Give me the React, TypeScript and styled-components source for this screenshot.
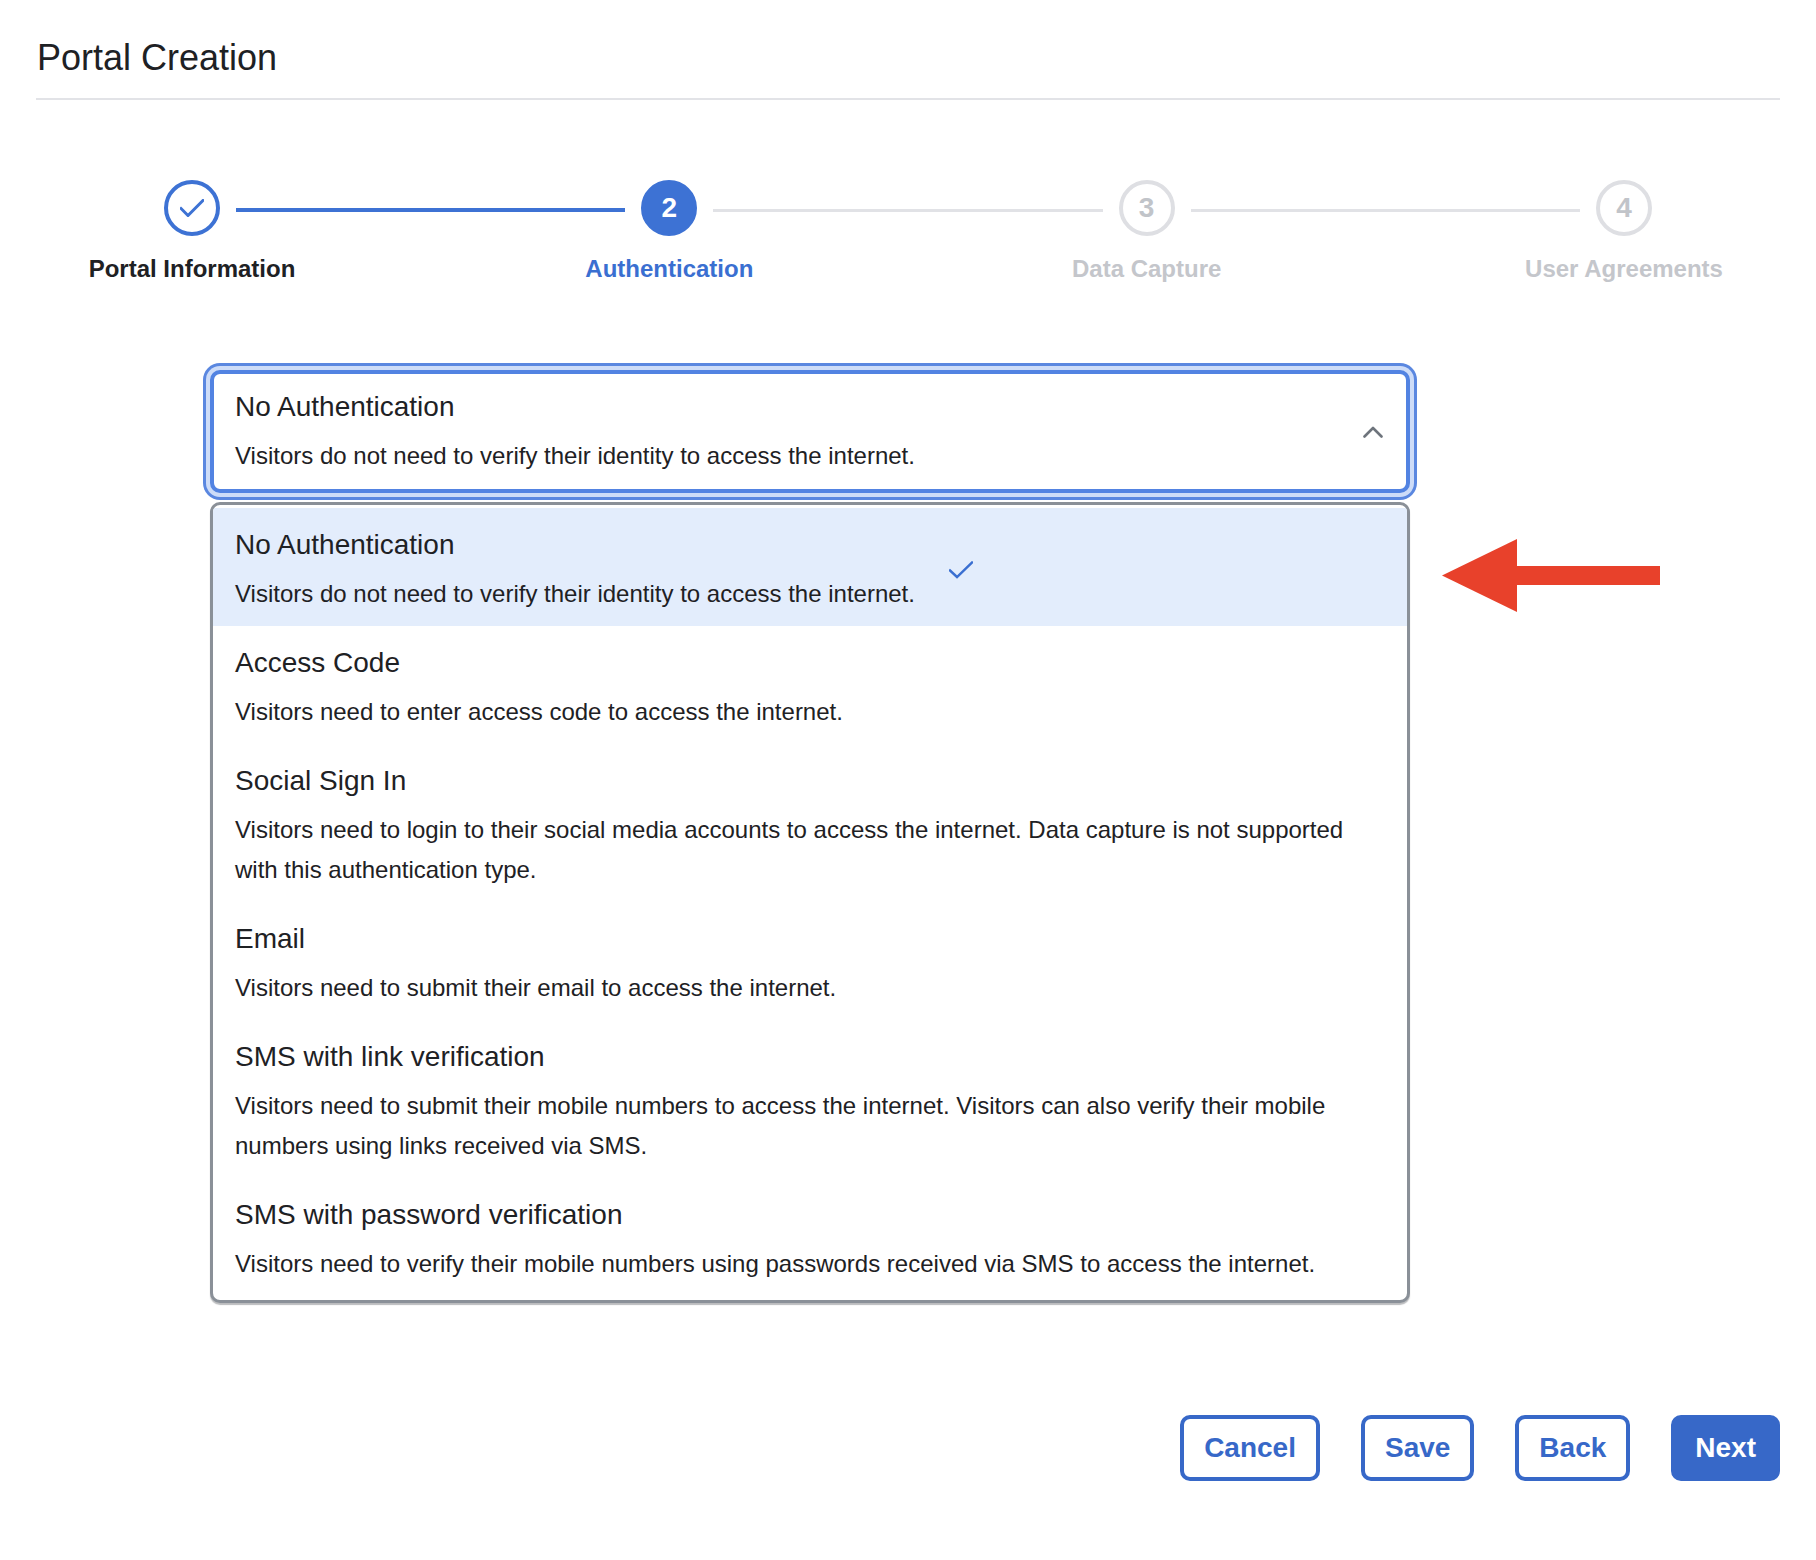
import React from "react";
import styled, { createGlobalStyle } from "styled-components";

const GlobalStyle = createGlobalStyle`
  html, body { margin: 0; padding: 0; background: #ffffff; }
  body {
    font-family: "Liberation Sans", Arial, Helvetica, sans-serif;
    color: #1e2124;
    -webkit-font-smoothing: antialiased;
  }
  * { box-sizing: border-box; }
`;

const Page = styled.div`
  padding: 0 36px 80px;
`;

const Header = styled.header`
  padding: 37px 0 19px 1px;
  border-bottom: 2px solid #e2e3e7;
`;

const Title = styled.h1`
  margin: 0;
  font-size: 36px;
  font-weight: 400;
  line-height: 42px;
  color: #1e2124;
`;

const Stepper = styled.div`
  display: flex;
  align-items: flex-start;
  padding: 0 128px;
  margin-top: 80px;
`;

const Step = styled.div`
  width: 56px;
  display: flex;
  flex-direction: column;
  align-items: center;
`;

type StepState = "done" | "active" | "todo";

const Circle = styled.div<{ $state: StepState }>`
  width: 56px;
  height: 56px;
  border-radius: 50%;
  display: flex;
  align-items: center;
  justify-content: center;
  font-size: 28px;
  font-weight: 700;
  border: 4px solid
    ${(p) => (p.$state === "todo" ? "#dedfe3" : "#3d72d4")};
  background: ${(p) => (p.$state === "active" ? "#3d72d4" : "#ffffff")};
  color: ${(p) =>
    p.$state === "active" ? "#ffffff" : p.$state === "todo" ? "#c1c4c9" : "#3d72d4"};
`;

const StepLabel = styled.div<{ $state: StepState }>`
  margin-top: 19px;
  white-space: nowrap;
  font-size: 24px;
  font-weight: 700;
  line-height: 28px;
  color: ${(p) =>
    p.$state === "active" ? "#3a6fd1" : p.$state === "todo" ? "#c4c6cb" : "#1e2124"};
`;

const Connector = styled.div<{ $done: boolean }>`
  flex: 1;
  margin: ${(p) => (p.$done ? "28px" : "29px")} 16px 0;
  height: ${(p) => (p.$done ? "4px" : "3px")};
  background: ${(p) => (p.$done ? "#3d72d4" : "#e1e2e6")};
`;

const Form = styled.div`
  position: relative;
  width: 1200px;
  margin: 87px 0 0 174px;
`;

const SelectBox = styled.div`
  display: flex;
  align-items: center;
  border: 4px solid #5283e2;
  border-radius: 10px;
  box-shadow: 0 0 0 4px #cddcf8, 0 0 0 7px #5a87e0;
  padding: 13px 23px 13px 21px;
  background: #ffffff;
`;

const OptionText = styled.div`
  display: flex;
  flex-direction: column;
`;

const OptionTitle = styled.div`
  font-size: 28px;
  line-height: 40px;
  color: #1e2124;
`;

const OptionDesc = styled.div`
  margin-top: 9px;
  font-size: 24px;
  line-height: 40px;
  color: #1e2124;
`;

const Spacer = styled.div`
  flex: 1;
`;

const List = styled.div`
  margin-top: 9px;
  border: 3px solid #8a9098;
  border-radius: 10px;
  padding: 3px 0 4px;
  box-shadow: 0 2px 1px rgba(60, 64, 70, 0.35);
  overflow: hidden;
  background: #ffffff;
`;

const Item = styled.div<{ $selected: boolean }>`
  display: flex;
  align-items: center;
  padding: 17px 22px 12px;
  background: ${(p) => (p.$selected ? "#e3edfc" : "transparent")};
`;

const CheckMark = styled.svg`
  margin-left: 34px;
  flex: none;
`;

const Arrow = styled.svg`
  position: absolute;
  left: calc(100% + 32px);
  top: 169px;
`;

const Footer = styled.div`
  display: flex;
  justify-content: flex-end;
  gap: 41px;
  margin-top: 112px;
`;

const Button = styled.button<{ $primary?: boolean }>`
  height: 66px;
  padding: 0 20px;
  border: 4px solid #3768c8;
  border-radius: 10px;
  font-family: "Liberation Sans", Arial, Helvetica, sans-serif;
  font-size: 28px;
  font-weight: 700;
  cursor: pointer;
  background: ${(p) => (p.$primary ? "#3768c8" : "#ffffff")};
  color: ${(p) => (p.$primary ? "#ffffff" : "#3768c8")};
`;

const steps: { label: string; state: StepState }[] = [
  { label: "Portal Information", state: "done" },
  { label: "Authentication", state: "active" },
  { label: "Data Capture", state: "todo" },
  { label: "User Agreements", state: "todo" },
];

const options = [
  {
    title: "No Authentication",
    desc: ["Visitors do not need to verify their identity to access the internet."],
  },
  {
    title: "Access Code",
    desc: ["Visitors need to enter access code to access the internet."],
  },
  {
    title: "Social Sign In",
    desc: [
      "Visitors need to login to their social media accounts to access the internet. Data capture is not supported",
      "with this authentication type.",
    ],
  },
  {
    title: "Email",
    desc: ["Visitors need to submit their email to access the internet."],
  },
  {
    title: "SMS with link verification",
    desc: [
      "Visitors need to submit their mobile numbers to access the internet. Visitors can also verify their mobile",
      "numbers using links received via SMS.",
    ],
  },
  {
    title: "SMS with password verification",
    desc: [
      "Visitors need to verify their mobile numbers using passwords received via SMS to access the internet.",
    ],
  },
];

const Check = ({ w, h, sw, color }: { w: number; h: number; sw: number; color: string }) => (
  <svg width={w} height={h} viewBox="0 0 24 18" fill="none">
    <polyline
      points="1,9.5 8,16.5 23,1.5"
      stroke={color}
      strokeWidth={sw}
      strokeLinecap="square"
      strokeLinejoin="miter"
    />
  </svg>
);

export default function App() {
  const selected = 0;
  return (
    <>
      <GlobalStyle />
      <Page>
        <Header>
          <Title>Portal Creation</Title>
        </Header>

        <Stepper>
          {steps.map((s, i) => (
            <React.Fragment key={s.label}>
              <Step>
                <Circle $state={s.state}>
                  {s.state === "done" ? (
                    <Check w={24} h={18} sw={3} color="#3d72d4" />
                  ) : (
                    i + 1
                  )}
                </Circle>
                <StepLabel $state={s.state}>{s.label}</StepLabel>
              </Step>
              {i < steps.length - 1 && <Connector $done={i === 0} />}
            </React.Fragment>
          ))}
        </Stepper>

        <Form>
          <SelectBox>
            <OptionText>
              <OptionTitle>{options[selected].title}</OptionTitle>
              <OptionDesc>{options[selected].desc[0]}</OptionDesc>
            </OptionText>
            <Spacer />
            <svg width="20" height="12" viewBox="0 0 20 12" fill="none">
              <polyline
                points="1.5,10.5 10,2 18.5,10.5"
                stroke="#6e747c"
                strokeWidth="2.6"
                strokeLinecap="round"
                strokeLinejoin="round"
              />
            </svg>
          </SelectBox>

          <List>
            {options.map((o, i) => (
              <Item key={o.title} $selected={i === selected}>
                <OptionText>
                  <OptionTitle>{o.title}</OptionTitle>
                  <OptionDesc>
                    {o.desc.map((line, j) => (
                      <div key={j}>{line}</div>
                    ))}
                  </OptionDesc>
                </OptionText>
                {i === selected && (
                  <CheckMark width="24" height="18" viewBox="0 0 24 18" fill="none">
                    <polyline
                      points="1,9.5 8,16 23,1.5"
                      stroke="#3a6fd1"
                      strokeWidth="2.4"
                      strokeLinecap="square"
                    />
                  </CheckMark>
                )}
              </Item>
            ))}
          </List>

          <Arrow width="218" height="73" viewBox="0 0 218 73">
            <polygon points="0,36.5 75,0 75,73" fill="#e8412b" />
            <rect x="74" y="27" width="144" height="19" fill="#e8412b" />
          </Arrow>
        </Form>

        <Footer>
          <Button>Cancel</Button>
          <Button>Save</Button>
          <Button>Back</Button>
          <Button $primary>Next</Button>
        </Footer>
      </Page>
    </>
  );
}
